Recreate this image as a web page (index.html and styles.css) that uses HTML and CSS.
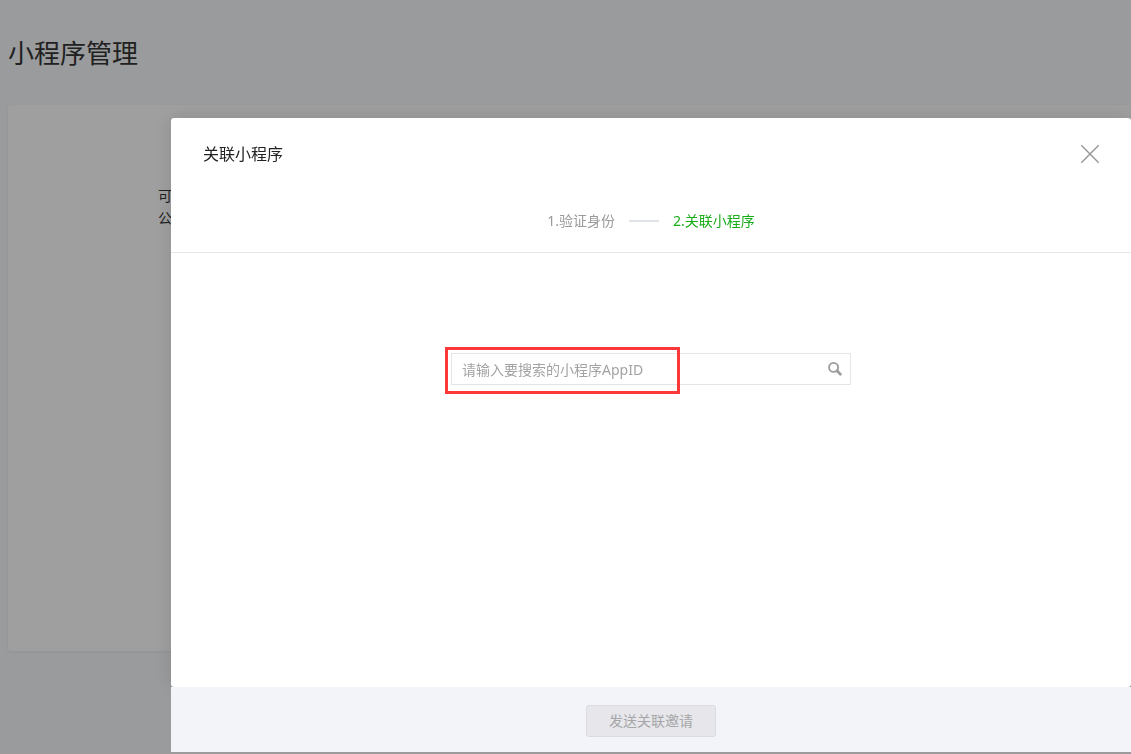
FILE: index.html
```html
<!DOCTYPE html>
<html lang="zh-CN">
<head>
<meta charset="utf-8">
<meta name="viewport" content="width=device-width, initial-scale=1">
<title>小程序管理</title>
<link rel="stylesheet" href="styles.css">
</head>
<body>
<main class="page">
  <h1 class="page-title">小程序管理</h1>
  <section class="panel">
    <p class="panel-text">可<br>公</p>
  </section>
</main>
<div class="overlay">
  <div class="dialog" role="dialog" aria-modal="true" aria-labelledby="dialog-title">
    <div class="sheet">
      <header class="dialog-head">
        <h2 class="dialog-title" id="dialog-title">关联小程序</h2>
        <button class="close" type="button" aria-label="关闭">
          <svg width="20" height="20" viewBox="0 0 20 20" fill="none" stroke="#969696" stroke-width="1.4"><path d="M1.3 1.3L18.7 18.7M18.7 1.3L1.3 18.7"/></svg>
        </button>
      </header>
      <ol class="steps">
        <li>1.验证身份</li>
        <li class="step-line" aria-hidden="true"></li>
        <li class="current">2.关联小程序</li>
      </ol>
      <form class="search-area">
        <div class="search">
          <input class="search-input" type="text" aria-label="小程序AppID" placeholder="请输入要搜索的小程序AppID">
          <button class="search-button" type="button" aria-label="搜索">
            <svg width="16" height="16" viewBox="0 0 16 16" fill="none" stroke="#9c9c9c"><circle cx="6.6" cy="6.4" r="4.5" stroke-width="1.9"/><path d="M10 9.8L13.4 13.2" stroke-width="2.8" stroke-linecap="round"/></svg>
          </button>
          <span class="highlight"></span>
        </div>
      </form>
    </div>
    <footer class="dialog-foot">
      <button class="submit" type="button" disabled>发送关联邀请</button>
    </footer>
  </div>
</div>
</body>
</html>
```
FILE: styles.css
```css
* {
  box-sizing: border-box;
}

body {
  margin: 0;
  overflow: hidden;
  background: #f6f8fb;
  color: #353535;
  font: 14px/22px "Noto Sans", "Noto Sans CJK SC", sans-serif;
}

h1, h2, p, ol {
  margin: 0;
  padding: 0;
  font-weight: 400;
}

button, input {
  font: inherit;
}

.page {
  display: flex;
  flex-direction: column;
  height: 100vh;
  padding: 33px 0 103px 8px;
}

.page-title {
  margin-bottom: 32px;
  font-size: 26px;
  line-height: 40px;
}

.panel {
  flex: 1;
  padding: 80px 150px;
  border-radius: 3px 0 0 3px;
  background: #fff;
  box-shadow: 0 1px 3px rgba(0, 0, 0, 0.06);
}

.overlay {
  position: fixed;
  inset: 0;
  display: flex;
  padding: 118px 0 2px 171px;
  background: rgba(0, 0, 0, 0.375);
}

.dialog {
  display: flex;
  flex: 1;
  flex-direction: column;
}

.sheet {
  flex: 1;
  border-radius: 3px;
  background: #fff;
  box-shadow: 0 0 20px rgba(0, 0, 0, 0.12);
}

.dialog-head {
  display: flex;
  align-items: center;
  justify-content: space-between;
  height: 72px;
  padding: 0 31px 0 32px;
}

.dialog-title {
  color: #222;
  font-size: 16px;
  line-height: 24px;
}

.close, .search-button {
  display: flex;
  padding: 0;
  border: 0;
  background: none;
}

.steps {
  display: flex;
  align-items: center;
  justify-content: center;
  gap: 14px;
  height: 63px;
  border-bottom: 1px solid #e4e8eb;
  color: #9a9a9a;
  list-style: none;
}

.step-line {
  width: 30px;
  height: 2px;
  background: #e0e4e8;
}

.current {
  color: #1aad19;
}

.search-area {
  display: flex;
  justify-content: center;
  padding-top: 100px;
}

.search {
  position: relative;
  display: flex;
  align-items: center;
  width: 400px;
  height: 32px;
  padding: 0 7px 0 10px;
  border: 1px solid #e4e5e7;
}

.search-input {
  flex: 1;
  min-width: 0;
  padding: 2px 0 0;
  border: 0;
  outline: 0;
  background: none;
}

.search-input::placeholder {
  color: #a3a3a3;
  opacity: 1;
}

.highlight {
  position: absolute;
  top: -7px;
  left: -7px;
  width: 235px;
  height: 47px;
  border: 3px solid #fc3838;
  pointer-events: none;
}

.dialog-foot {
  position: relative;
  display: flex;
  align-items: center;
  justify-content: center;
  height: 65px;
  padding-top: 2px;
  background: #f3f4f9;
}

.submit {
  width: 130px;
  height: 32px;
  padding: 0;
  border: 1px solid #dadbe0;
  border-radius: 3px;
  background: #e6e6eb;
  color: #a6a6a9;
}
```
